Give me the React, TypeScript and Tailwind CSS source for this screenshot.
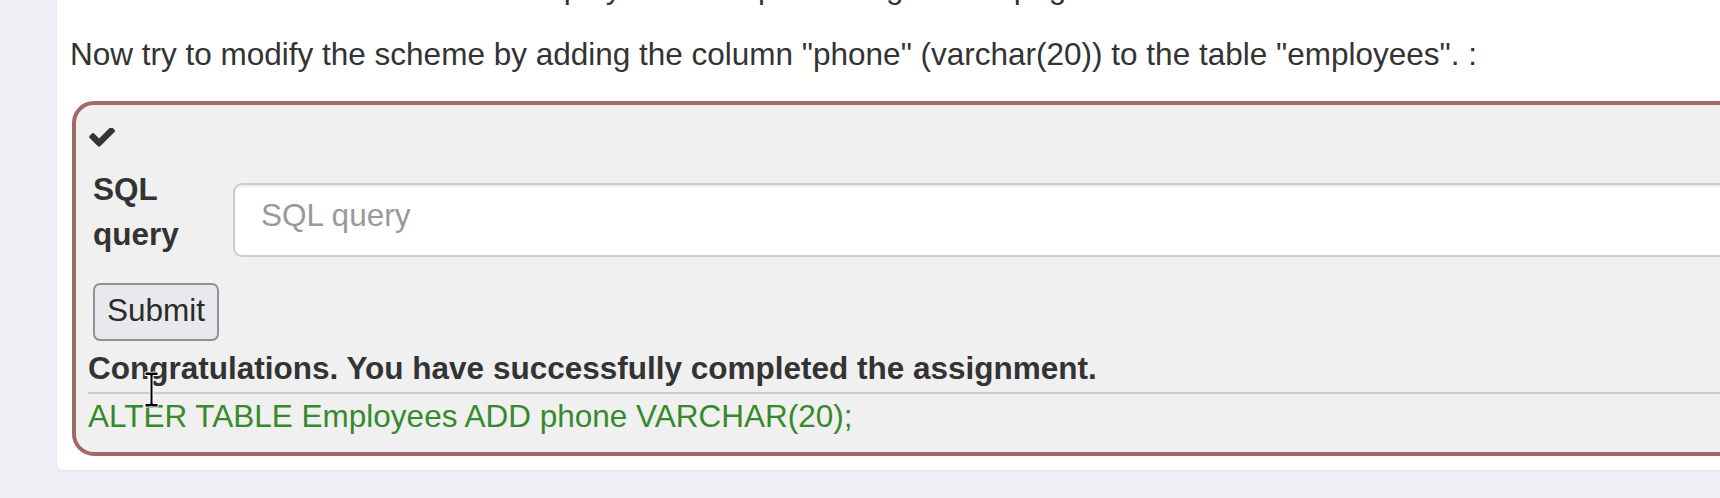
import React from 'react'

// FontAwesome 4 style check glyph
const CheckIcon = () => (
  <svg width="26" height="19" viewBox="109 430 1562 1064" className="block">
    <path
      fill="#333"
      d="M1671 566q0 40-28 68l-724 724-136 136q-28 28-68 28t-68-28l-136-136-362-362q-28-28-28-68t28-68l136-136q28-28 68-28t68 28l294 295 656-657q28-28 68-28t68 28l136 136q28 28 28 68z"
    />
  </svg>
)

// mouse text cursor sitting over the result text
const IBeam = () => (
  <svg width="15" height="37" viewBox="0 0 15 37" className="absolute left-[144px] top-[371px]">
    <path
      d="M1 1h5.5l1 1 1-1H14v3.5H9v28H14V36H8.5l-1-1-1 1H1v-3.5h5v-28H1z"
      fill="#000"
      stroke="#fff"
      strokeWidth="1"
    />
  </svg>
)

export default function App() {
  return (
    <div className="relative flow-root min-h-screen overflow-hidden bg-[#eff0f5] pl-[57px] font-['Liberation_Sans',Arial,sans-serif] text-[31.5px] leading-[45px] text-[#333]">
      <div className="w-[1800px] rounded-b-[6px] bg-white pb-[14px] pl-[13px] shadow-[0_1px_3px_rgba(0,0,0,0.08)]">
        <p className="-mt-[35px] whitespace-nowrap pl-[70px]">
          This statement creates the employees example table given on page 2.
        </p>
        <p className="mt-[22px] whitespace-nowrap">
          Now try to modify the scheme by adding the column "phone" (varchar(20)) to the table "employees". :
        </p>

        <div className="ml-[2px] mt-[24px] rounded-l-[22px] border-[4px] border-[#a26a66] bg-[#f0f0f0] pb-[13px] pl-[12px] pt-[14px]">
          <div className="flex h-[36px] items-center pl-[1px]">
            <CheckIcon />
          </div>

          <form className="flex items-start pl-[5px]" onSubmit={(e) => e.preventDefault()}>
            <label className="w-[140px] shrink-0 pt-[12px] font-bold">SQL query</label>
            <input
              type="text"
              placeholder="SQL query"
              className="mt-[28px] h-[74px] flex-1 rounded-[9px] border-2 border-[#cccccc] bg-white px-[26px] pb-[10px] text-[31.5px] text-[#555] shadow-[inset_0_2px_2px_rgba(0,0,0,0.075)] outline-none placeholder:text-[#999]"
            />
          </form>

          <button className="ml-[5px] mt-[26px] h-[58px] rounded-[7px] border-2 border-[#8f8f9d] bg-[#e9e9ed] px-[12px] pb-[4px] leading-[45px] text-[#2a2a2a]">
            Submit
          </button>

          <div className="mt-[5px] whitespace-nowrap font-bold">
            Congratulations. You have successfully completed the assignment.
          </div>
          <div className="mt-[1px] h-[2px] bg-[#cbcbcb]" />
          <div className="whitespace-nowrap text-[#378a2b]">ALTER TABLE Employees ADD phone VARCHAR(20);</div>
        </div>
      </div>
      <IBeam />
    </div>
  )
}
